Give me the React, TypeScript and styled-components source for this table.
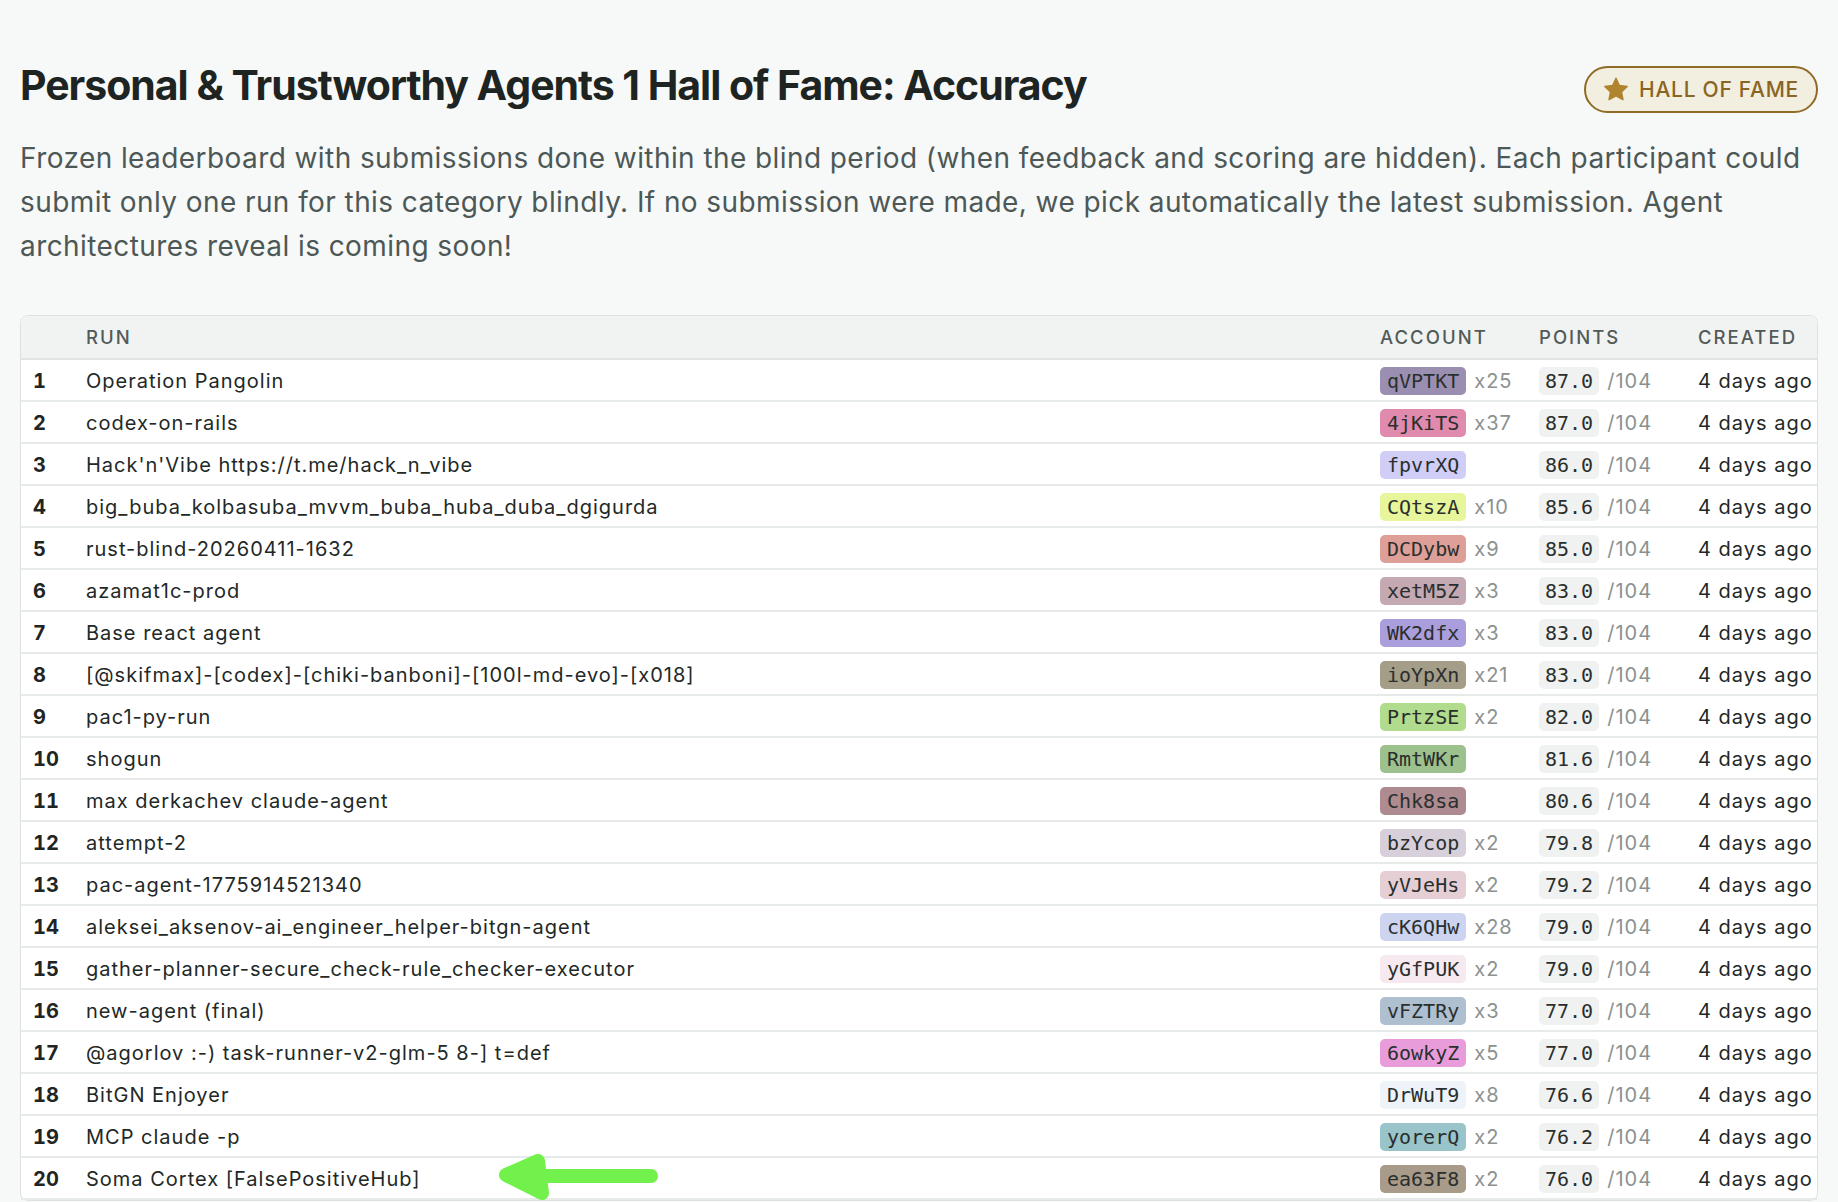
import React from "react";
import styled, { createGlobalStyle } from "styled-components";

const GlobalStyle = createGlobalStyle`
  html, body { margin: 0; padding: 0; }
  body {
    background: #f7f9f8;
    font-family: "Inter", "Noto Sans", "Liberation Sans", sans-serif;
    color: #1f2523;
  }
`;

const Page = styled.main`
  padding: 60px 20px 0 20px;
`;

const Header = styled.header`
  display: flex;
  align-items: flex-start;
  justify-content: space-between;
`;

const Title = styled.h1`
  margin: 0;
  font-size: 41px;
  line-height: 50px;
  font-weight: 700;
  letter-spacing: -0.025em;
  color: #1e2422;
`;

const Badge = styled.div`
  display: inline-flex;
  align-items: center;
  gap: 10px;
  box-sizing: border-box;
  height: 47px;
  margin-top: 6px;
  padding: 0 17px;
  border: 2px solid #8f6b26;
  border-radius: 999px;
  background: #f2eee0;
  color: #8a6522;
  font-size: 21px;
  font-weight: 500;
  letter-spacing: 0.035em;
`;

const Description = styled.p`
  margin: 23px 0 0 0;
  font-size: 28px;
  line-height: 44px;
  color: #4d5856;
  letter-spacing: 0.42px;
`;

const Table = styled.section`
  margin-top: 47px;
  border: 1px solid #dde2e1;
  border-radius: 8px;
  background: #ffffff;
`;

const columns = "53px 1fr 159px 159px 131px";

const HeadRow = styled.div`
  display: grid;
  grid-template-columns: ${columns};
  height: 42px;
  align-items: center;
  background: #f1f3f2;
  border-bottom: 2px solid #e0e4e3;
  border-radius: 8px 8px 0 0;
`;

const HeadCell = styled.div`
  padding-left: 12px;
  font-size: 18.5px;
  font-weight: 500;
  letter-spacing: 0.11em;
  color: #525b59;
  text-transform: uppercase;
`;

const Row = styled.div`
  display: grid;
  grid-template-columns: ${columns};
  height: 40px;
  border-bottom: 2px solid #e6eae9;
`;

const Cell = styled.div`
  position: relative;
  padding: 2px 0 0 12px;
  display: flex;
  align-items: center;
  gap: 8px;
  font-size: 20px;
  letter-spacing: 0.05em;
  white-space: nowrap;
  color: #222826;
`;

const Rank = styled(Cell)`
  font-weight: 700;
  letter-spacing: 0;
  font-variant-numeric: tabular-nums;
  color: #1f2523;
`;

const Pill = styled.span<{ $bg: string; $pad?: number }>`
  display: inline-block;
  height: 28px;
  line-height: 28px;
  padding: 0 ${(p) => p.$pad ?? 7}px;
  border-radius: 5px;
  background: ${(p) => p.$bg};
  font-family: "DejaVu Sans Mono", "Liberation Mono", monospace;
  font-size: 20px;
  letter-spacing: 0;
  color: #2a2f2e;
`;

const Muted = styled.span`
  color: #8b9190;
`;

const Arrow = styled.svg`
  position: absolute;
  left: 416px;
  top: -10px;
  width: 175px;
  height: 57px;
  overflow: visible;
  pointer-events: none;
`;

type Entry = {
  run: string;
  acc: string;
  bg: string;
  count?: string;
  pts: string;
};

const rows: Entry[] = [
  { run: "Operation Pangolin", acc: "qVPTKT", bg: "#9b8fb1", count: "x25", pts: "87.0" },
  { run: "codex-on-rails", acc: "4jKiTS", bg: "#e08aad", count: "x37", pts: "87.0" },
  { run: "Hack'n'Vibe https://t.me/hack_n_vibe", acc: "fpvrXQ", bg: "#d0cef6", pts: "86.0" },
  { run: "big_buba_kolbasuba_mvvm_buba_huba_duba_dgigurda", acc: "CQtszA", bg: "#e7f69b", count: "x10", pts: "85.6" },
  { run: "rust-blind-20260411-1632", acc: "DCDybw", bg: "#de9f98", count: "x9", pts: "85.0" },
  { run: "azamat1c-prod", acc: "xetM5Z", bg: "#c4a9b3", count: "x3", pts: "83.0" },
  { run: "Base react agent", acc: "WK2dfx", bg: "#aa9edd", count: "x3", pts: "83.0" },
  { run: "[@skifmax]-[codex]-[chiki-banboni]-[100l-md-evo]-[x018]", acc: "ioYpXn", bg: "#a49d87", count: "x21", pts: "83.0" },
  { run: "pac1-py-run", acc: "PrtzSE", bg: "#b1dc8d", count: "x2", pts: "82.0" },
  { run: "shogun", acc: "RmtWKr", bg: "#9dc18d", pts: "81.6" },
  { run: "max derkachev claude-agent", acc: "Chk8sa", bg: "#ae8b90", pts: "80.6" },
  { run: "attempt-2", acc: "bzYcop", bg: "#d7cfda", count: "x2", pts: "79.8" },
  { run: "pac-agent-1775914521340", acc: "yVJeHs", bg: "#e5cfd5", count: "x2", pts: "79.2" },
  { run: "aleksei_aksenov-ai_engineer_helper-bitgn-agent", acc: "cK6QHw", bg: "#cdd4f0", count: "x28", pts: "79.0" },
  { run: "gather-planner-secure_check-rule_checker-executor", acc: "yGfPUK", bg: "#f6e9f0", count: "x2", pts: "79.0" },
  { run: "new-agent (final)", acc: "vFZTRy", bg: "#aebfd0", count: "x3", pts: "77.0" },
  { run: "@agorlov :-) task-runner-v2-glm-5 8-] t=def", acc: "6owkyZ", bg: "#e89cd9", count: "x5", pts: "77.0" },
  { run: "BitGN Enjoyer", acc: "DrWuT9", bg: "#edf3f8", count: "x8", pts: "76.6" },
  { run: "MCP claude -p", acc: "yorerQ", bg: "#99c4c9", count: "x2", pts: "76.2" },
  { run: "Soma Cortex [FalsePositiveHub]", acc: "ea63F8", bg: "#a99b89", count: "x2", pts: "76.0" },
];

const StarIcon = () => (
  <svg width="26" height="25" viewBox="0 0 24 23" aria-hidden="true">
    <path
      d="M12 1.2l3.1 6.6 7.2.9-5.3 5 1.4 7.1L12 17.3l-6.4 3.5L7 13.7l-5.3-5 7.2-.9z"
      fill="#b0842e"
      stroke="#b0842e"
      strokeWidth="1.4"
      strokeLinejoin="round"
    />
  </svg>
);

const GREEN = "#72f04b";

export default function App() {
  return (
    <>
      <GlobalStyle />
      <Page>
        <Header>
          <Title>Personal &amp; Trustworthy Agents 1 Hall of Fame: Accuracy</Title>
          <Badge>
            <StarIcon />
            HALL OF FAME
          </Badge>
        </Header>
        <Description>
          Frozen leaderboard with submissions done within the blind period (when feedback and scoring are hidden). Each
          participant could submit only one run for this category blindly. If no submission were made, we pick
          automatically the latest submission. Agent architectures reveal is coming soon!
        </Description>
        <Table>
          <HeadRow>
            <HeadCell />
            <HeadCell>Run</HeadCell>
            <HeadCell>Account</HeadCell>
            <HeadCell>Points</HeadCell>
            <HeadCell>Created</HeadCell>
          </HeadRow>
          {rows.map((r, i) => (
            <Row key={i}>
              <Rank>{i + 1}</Rank>
              <Cell>
                {r.run}
                {i === rows.length - 1 && (
                  <Arrow viewBox="0 0 175 57" aria-hidden="true">
                    <path
                      d="M48 13 L16 27 L52 45 Z"
                      fill={GREEN}
                      stroke={GREEN}
                      strokeWidth="14"
                      strokeLinecap="round"
                      strokeLinejoin="round"
                    />
                    <path
                      d="M20 28 L161 28"
                      fill="none"
                      stroke={GREEN}
                      strokeWidth="14"
                      strokeLinecap="round"
                    />
                  </Arrow>
                )}
              </Cell>
              <Cell>
                <Pill $bg={r.bg}>{r.acc}</Pill>
                {r.count && <Muted>{r.count}</Muted>}
              </Cell>
              <Cell>
                <Pill $bg="#f0f2f1" $pad={6}>
                  {r.pts}
                </Pill>
                <Muted>/104</Muted>
              </Cell>
              <Cell>4 days ago</Cell>
            </Row>
          ))}
        </Table>
      </Page>
    </>
  );
}
